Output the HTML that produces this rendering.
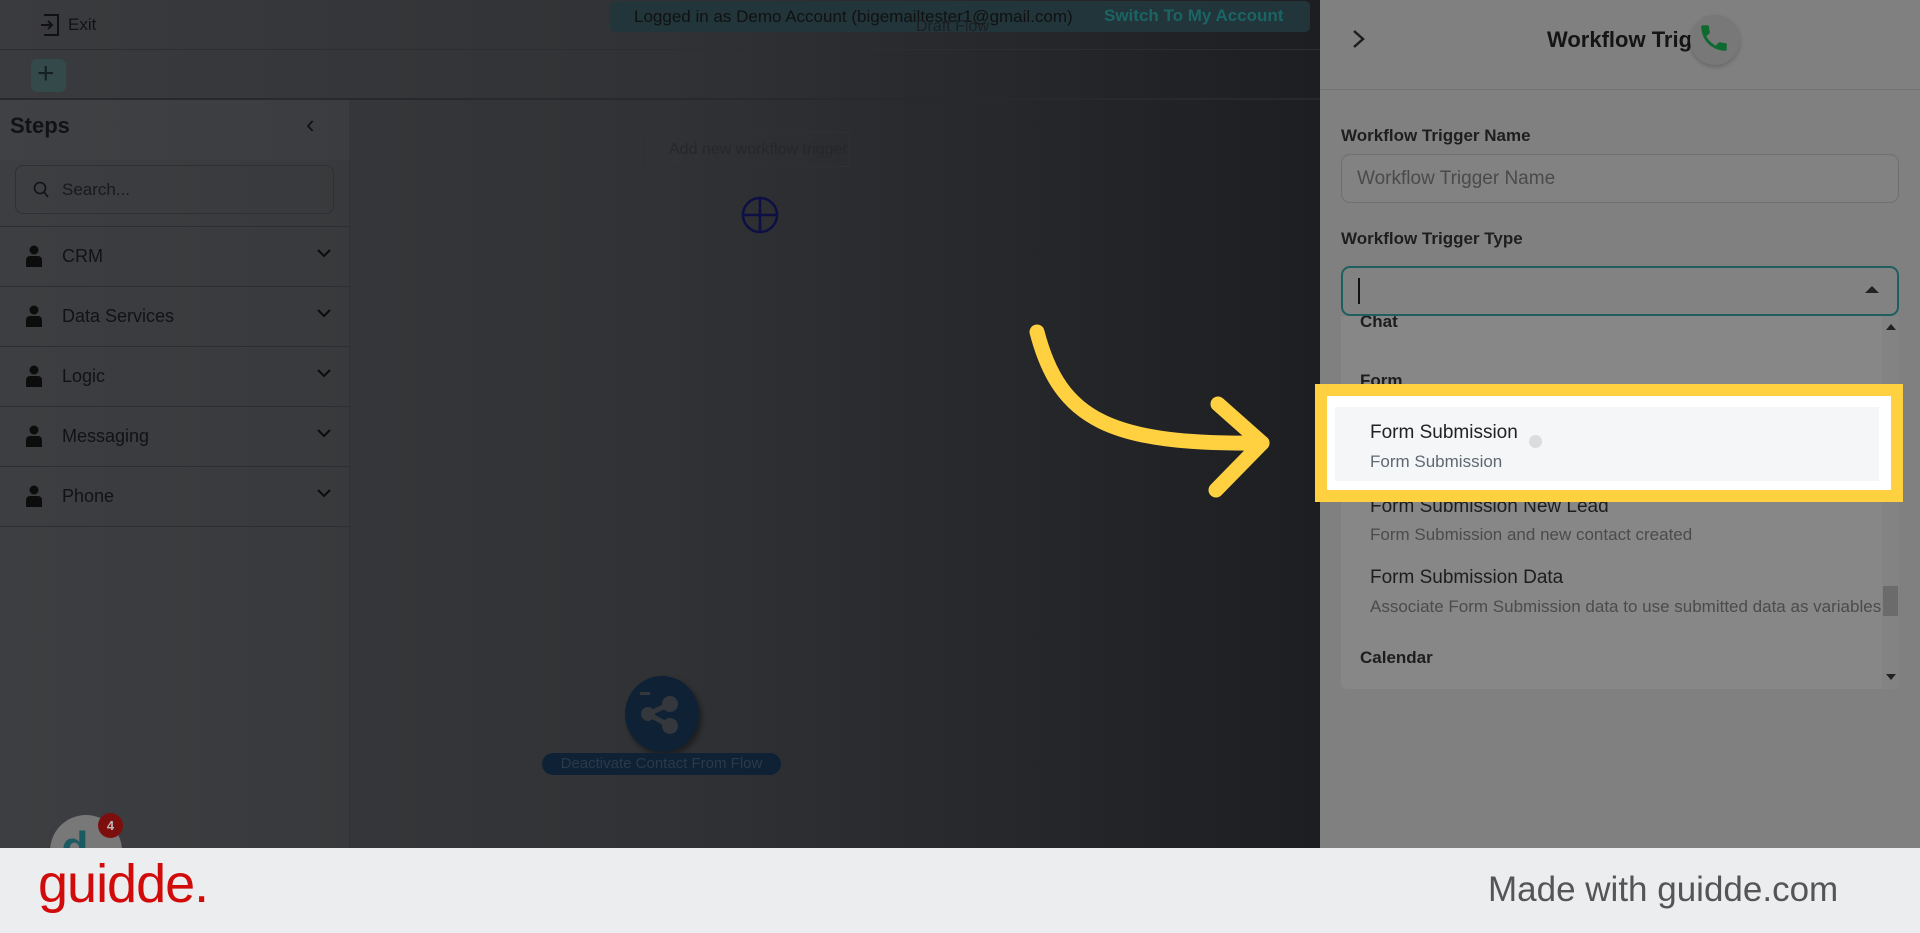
<!DOCTYPE html>
<html><head><meta charset="utf-8"><style>
*{margin:0;padding:0;box-sizing:border-box}
body{width:1920px;height:933px;overflow:hidden;font-family:"Liberation Sans",sans-serif;position:relative;background:#2e3033}
.abs{position:absolute}
#left{left:0;top:0;width:1320px;height:848px;background:linear-gradient(90deg,#3a3b3e 0%,#303235 50%,#1c1e21 100%)}
.side{left:0;top:100px;width:350px;height:748px;background:rgba(255,255,255,0.02);border-right:1px solid #303235}
.item{left:0;width:350px;height:60px;border-bottom:1px solid #2c2e31;color:#101215;font-size:18px}
.item span{position:absolute;left:62px;top:19px}
.item .ic{position:absolute;left:26px;top:18px}
.item .ch{position:absolute;left:316px;top:20px}
#right{left:1320px;top:0;width:600px;height:848px;background:#808080}
.lbl{font-size:17px;color:#1e1e1e;font-weight:bold}
.dd{left:1341px;top:316px;width:558px;height:373px;background:#878787;border-radius:0 0 6px 6px;overflow:hidden}
.t{font-size:19px;color:#1d1d1d;position:absolute;left:29px}
.s{font-size:17px;color:#4b4b4b;position:absolute;left:29px;white-space:nowrap}
#foot{left:0;top:848px;width:1920px;height:85px;background:#ecedef}
</style></head><body>
<div id="left" class="abs"></div>
<div class="abs" style="left:0;top:49px;width:1320px;height:1px;background:#2c2e31"></div>
<div class="abs" style="left:0;top:98px;width:1320px;height:2px;background:#28292c"></div>
<svg class="abs" style="left:40px;top:13px" width="22" height="24" viewBox="0 0 22 24"><path d="M4 2h14v20H4M1 12h11M8 8l4 4-4 4" stroke="#111" stroke-width="2" fill="none"/></svg>
<div class="abs" style="left:68px;top:15px;font-size:17px;color:#101215">Exit</div>
<div class="abs" style="left:31px;top:59px;width:35px;height:33px;border-radius:6px;background:#34494a"></div>
<div class="abs" style="left:37px;top:57px;font-size:30px;color:#142021">+</div>
<div class="abs" style="left:610px;top:1px;width:700px;height:31px;background:#22353a;border-radius:5px"></div>
<div class="abs" style="left:634px;top:7px;font-size:17px;color:#0f1112">Logged in as Demo Account (bigemailtester1@gmail.com)</div>
<div class="abs" style="left:1104px;top:6px;font-size:17px;font-weight:bold;color:#1b6466">Switch To My Account</div>
<div class="abs" style="left:916px;top:18px;font-size:16px;color:#1c1e21">Draft Flow</div>
<div class="abs side"></div>
<div class="abs" style="left:0;top:100px;width:350px;height:60px;background:rgba(255,255,255,0.02)"></div>
<div class="abs" style="left:10px;top:113px;font-size:22px;font-weight:bold;color:#101215">Steps</div>
<div class="abs" style="left:306px;top:109px;font-size:26px;color:#101215">‹</div>
<div class="abs" style="left:15px;top:165px;width:319px;height:49px;border:1px solid #2e3033;border-radius:8px"></div>
<svg class="abs" style="left:33px;top:181px" width="16" height="18"><circle cx="7" cy="7" r="5.5" stroke="#101215" stroke-width="1.6" fill="none"/><path d="M11 11l4 5" stroke="#101215" stroke-width="1.6"/></svg>
<div class="abs" style="left:62px;top:180px;font-size:17px;color:#17191c">Search...</div>
<div class="abs" style="left:0;top:226px;width:350px;height:1px;background:#2c2e31"></div>
<div class="abs item" style="top:227px"><svg class="ic" width="16" height="22"><circle cx="8" cy="5" r="4.5" fill="#0c0c0c"/><path d="M0 22v-7a4 4 0 0 1 4-4h8a4 4 0 0 1 4 4v7z" fill="#0c0c0c"/></svg><span>CRM</span><svg class="ch" width="16" height="12"><path d="M2 3l6 6 6-6" stroke="#0c0c0c" stroke-width="2" fill="none"/></svg></div>
<div class="abs item" style="top:287px"><svg class="ic" width="16" height="22"><circle cx="8" cy="5" r="4.5" fill="#0c0c0c"/><path d="M0 22v-7a4 4 0 0 1 4-4h8a4 4 0 0 1 4 4v7z" fill="#0c0c0c"/></svg><span>Data Services</span><svg class="ch" width="16" height="12"><path d="M2 3l6 6 6-6" stroke="#0c0c0c" stroke-width="2" fill="none"/></svg></div>
<div class="abs item" style="top:347px"><svg class="ic" width="16" height="22"><circle cx="8" cy="5" r="4.5" fill="#0c0c0c"/><path d="M0 22v-7a4 4 0 0 1 4-4h8a4 4 0 0 1 4 4v7z" fill="#0c0c0c"/></svg><span>Logic</span><svg class="ch" width="16" height="12"><path d="M2 3l6 6 6-6" stroke="#0c0c0c" stroke-width="2" fill="none"/></svg></div>
<div class="abs item" style="top:407px"><svg class="ic" width="16" height="22"><circle cx="8" cy="5" r="4.5" fill="#0c0c0c"/><path d="M0 22v-7a4 4 0 0 1 4-4h8a4 4 0 0 1 4 4v7z" fill="#0c0c0c"/></svg><span>Messaging</span><svg class="ch" width="16" height="12"><path d="M2 3l6 6 6-6" stroke="#0c0c0c" stroke-width="2" fill="none"/></svg></div>
<div class="abs item" style="top:467px"><svg class="ic" width="16" height="22"><circle cx="8" cy="5" r="4.5" fill="#0c0c0c"/><path d="M0 22v-7a4 4 0 0 1 4-4h8a4 4 0 0 1 4 4v7z" fill="#0c0c0c"/></svg><span>Phone</span><svg class="ch" width="16" height="12"><path d="M2 3l6 6 6-6" stroke="#0c0c0c" stroke-width="2" fill="none"/></svg></div>
<div class="abs" style="left:643px;top:132px;width:207px;height:35px;border:1px solid #2e3033;color:#25272a;font-size:16px;padding:8px 0 0 25px">Add new workflow trigger</div>
<svg class="abs" style="left:741px;top:196px" width="38" height="38"><circle cx="19" cy="19" r="17" stroke="#0d0f45" stroke-width="2.5" fill="none"/><path d="M19 2v34M2 19h34" stroke="#0d0f45" stroke-width="2.5"/></svg>
<div class="abs" style="left:625px;top:676px;width:74px;height:76px;border-radius:50%;background:#0f2134;box-shadow:3px 4px 6px rgba(0,0,0,0.4)"></div>
<svg class="abs" style="left:640px;top:690px" width="44" height="48"><rect x="0" y="2" width="10" height="3" fill="#34373c"/><circle cx="30" cy="14" r="8" fill="#34373c"/><circle cx="8" cy="24" r="7" fill="#34373c"/><circle cx="30" cy="36" r="8" fill="#34373c"/><path d="M8 24L30 14M8 24L30 36" stroke="#34373c" stroke-width="5"/></svg>
<div class="abs" style="left:542px;top:753px;width:239px;height:22px;border-radius:11px;background:#0f2134;color:#293a4c;font-size:15px;text-align:center;line-height:22px">Deactivate Contact From Flow</div>
<div class="abs" style="left:50px;top:815px;width:72px;height:72px;border-radius:50%;background:#787878"></div>
<div class="abs" style="left:40px;top:818px;width:70px;height:34px;font-size:44px;color:#1b5a63;font-weight:bold;text-align:center;overflow:hidden;line-height:60px">d</div>
<div class="abs" style="left:98px;top:813px;width:25px;height:25px;border-radius:50%;background:#7d0e0e;color:#bbb;font-size:13px;text-align:center;line-height:25px;font-weight:bold">4</div>
<div id="right" class="abs"></div>
<div class="abs" style="left:1320px;top:89px;width:600px;height:1px;background:#727272"></div>
<svg class="abs" style="left:1351px;top:28px" width="16" height="22"><path d="M3 3l9 8-9 8" stroke="#1e1e1e" stroke-width="2.5" fill="none"/></svg>
<div class="abs" style="left:1547px;top:27px;font-size:22px;font-weight:bold;color:#151515">Workflow Trig</div>
<div class="abs" style="left:1690px;top:15px;width:50px;height:50px;border-radius:50%;background:#787878;box-shadow:0 2px 4px rgba(0,0,0,0.2)"></div>
<svg class="abs" style="left:1697px;top:21px" width="34" height="34" viewBox="0 0 24 24"><path d="M6.6 10.8c1.4 2.8 3.8 5.1 6.6 6.6l2.2-2.2c.3-.3.7-.4 1-.2 1.1.4 2.3.6 3.6.6.6 0 1 .4 1 1V20c0 .6-.4 1-1 1C10.6 21 3 13.4 3 4c0-.6.4-1 1-1h3.5c.6 0 1 .4 1 1 0 1.3.2 2.5.6 3.6.1.3 0 .7-.2 1z" fill="#0e6a2f"/></svg>
<div class="abs lbl" style="left:1341px;top:126px">Workflow Trigger Name</div>
<div class="abs" style="left:1341px;top:154px;width:558px;height:49px;border:1px solid #6f6f6f;border-radius:9px;background:#828282"></div>
<div class="abs" style="left:1357px;top:168px;font-size:19px;color:#4a4a4a">Workflow Trigger Name</div>
<div class="abs lbl" style="left:1341px;top:229px">Workflow Trigger Type</div>
<div class="abs" style="left:1341px;top:266px;width:558px;height:50px;border:2px solid #1f5f5f;border-radius:9px;background:#828282"></div>
<div class="abs" style="left:1358px;top:278px;width:1.5px;height:26px;background:#111"></div>
<svg class="abs" style="left:1865px;top:286px" width="14" height="8"><path d="M0 7l7-7 7 7z" fill="#222"/></svg>
<div class="abs dd">
 <div class="t" style="left:19px;top:-4px;font-weight:bold;font-size:17px">Chat</div>
 <div class="t" style="left:19px;top:55px;font-weight:bold;font-size:17px">Form</div>
 <div class="t" style="top:180px">Form Submission New Lead</div>
 <div class="s" style="top:209px">Form Submission and new contact created</div>
 <div class="t" style="top:251px">Form Submission Data</div>
 <div class="s" style="top:281px">Associate Form Submission data to use submitted data as variables</div>
 <div class="t" style="left:19px;top:332px;font-weight:bold;font-size:17px">Calendar</div>
 <div class="abs" style="left:541px;top:0;width:17px;height:373px;background:#838383"></div>
 <svg class="abs" style="left:545px;top:8px" width="10" height="6"><path d="M0 6l5-6 5 6z" fill="#222"/></svg>
 <svg class="abs" style="left:545px;top:358px" width="10" height="6"><path d="M0 0l5 6 5-6z" fill="#222"/></svg>
 <div class="abs" style="left:542px;top:270px;width:15px;height:30px;background:#6b6b6b"></div>
</div>
<div class="abs" style="left:1315px;top:384px;width:588px;height:118px;border:12px solid #ffd141;background:#fff"></div>
<div class="abs" style="left:1335px;top:407px;width:544px;height:74px;background:#f5f6f8"></div>
<div class="abs" style="left:1370px;top:422px;font-size:19px;color:#222">Form Submission</div>
<div class="abs" style="left:1370px;top:452px;font-size:17px;color:#5f6872">Form Submission</div>
<div class="abs" style="left:1529px;top:435px;width:13px;height:13px;border-radius:50%;background:#dcdcdc"></div>
<svg class="abs" style="left:0;top:0" width="1320" height="848"><path d="M1037 332C1060 420 1110 445 1262 443" stroke="#ffd141" stroke-width="15" fill="none" stroke-linecap="round"/><path d="M1218 404L1262 443L1216 490" stroke="#ffd141" stroke-width="15" fill="none" stroke-linecap="round" stroke-linejoin="round"/></svg>
<div id="foot" class="abs"></div>
<div class="abs" style="left:38px;top:853px;font-size:54px;color:#d10a0a;letter-spacing:-1px">guidde.</div>
<div class="abs" style="left:1488px;top:870px;font-size:35px;color:#555">Made with guidde.com</div>
</body></html>
